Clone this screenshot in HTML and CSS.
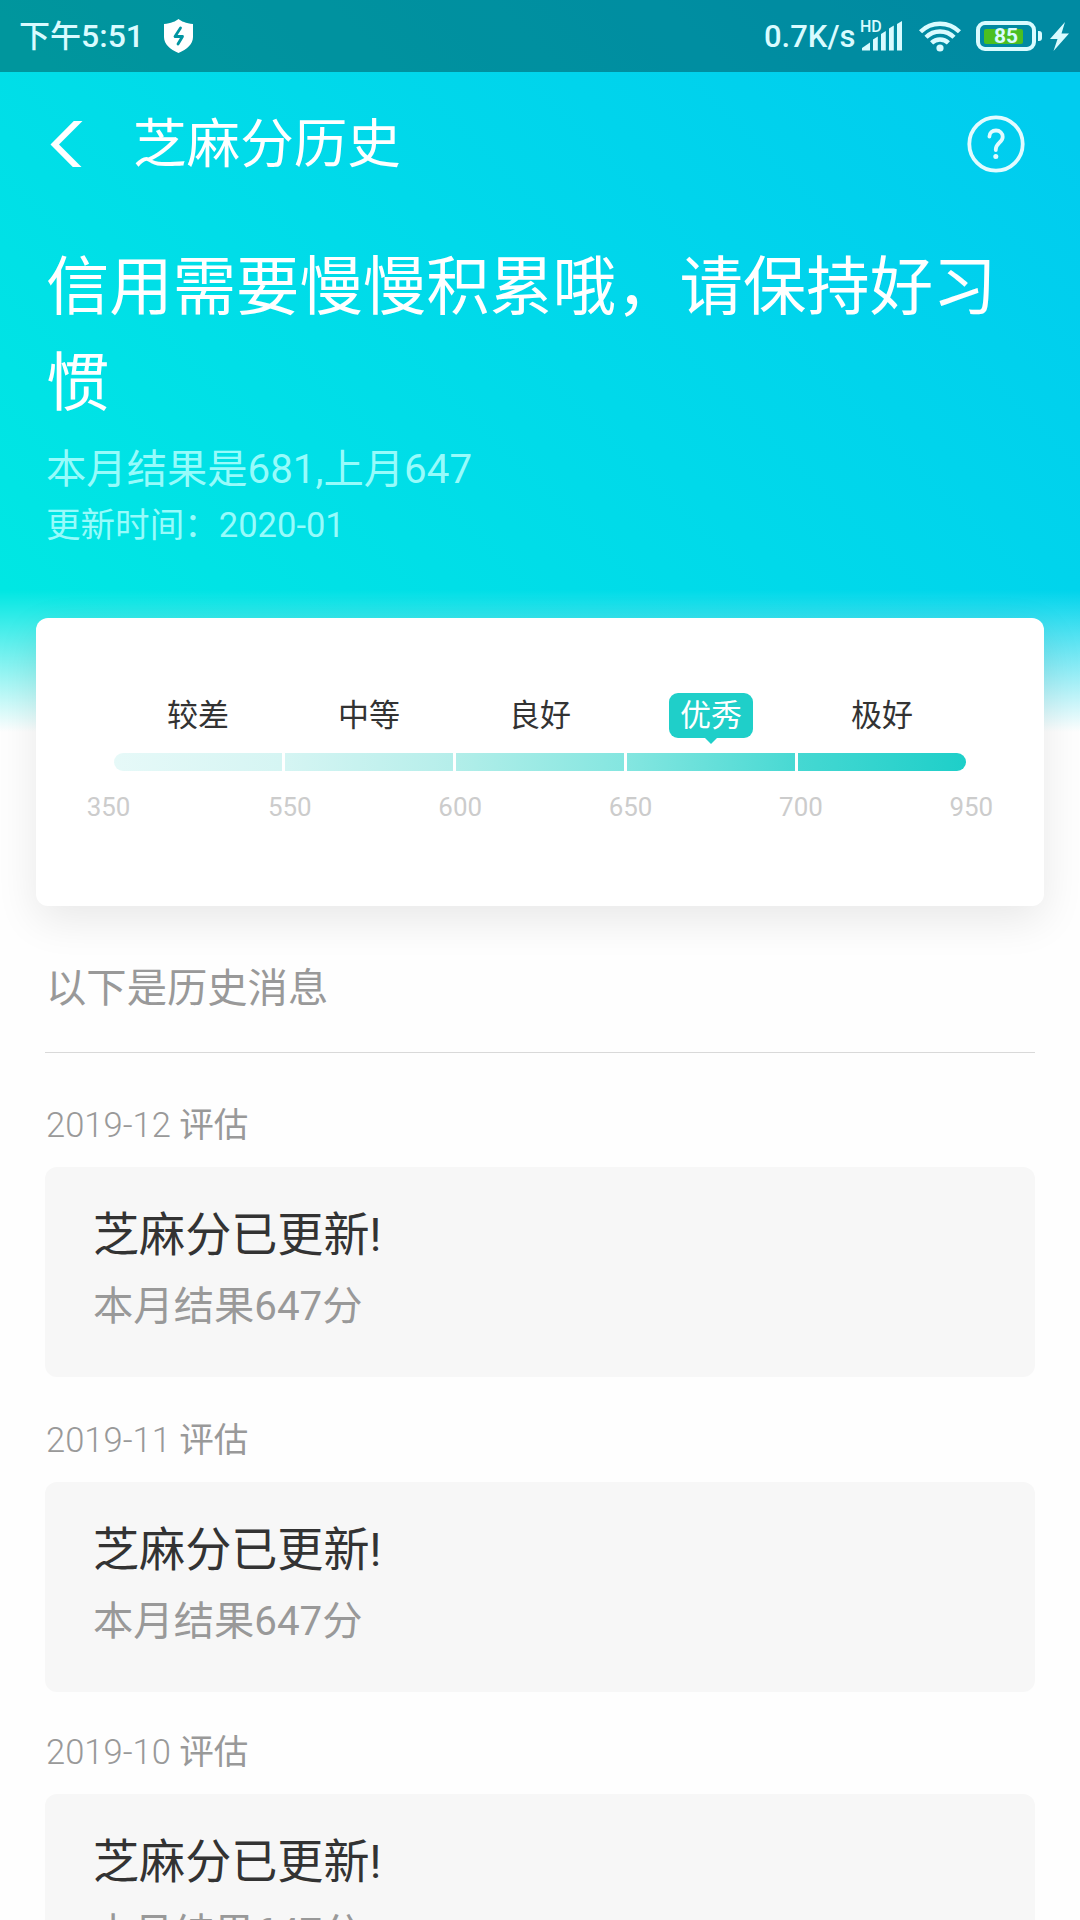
FILE: index.html
```html
<!DOCTYPE html>
<html lang="zh-CN">
<head>
  <meta charset="UTF-8" />
  <meta name="viewport" content="width=device-width, initial-scale=1.0"/>
  <title>芝麻分历史</title>
  <link rel="stylesheet" href="styles.css">
</head>
<body>
  <header class="hero">
    <!-- Status bar -->
    <div class="status-bar">
      <div class="status-left">
        <span class="clock">下午<span class="clock-time">5:51</span></span>
        <svg class="shield" width="29" height="34" viewBox="0 0 29 34">
          <path d="M14.5 0C17 2.2 22 4.4 29 5v13c0 7-6 12.500-14.500 16C6 30.500 0 25 0 18V5c7-.600 12-2.800 14.500-5z" fill="#fff"/>
          <path d="M16.500 9L11 17.500h7.500L14 25" fill="none" stroke="#0094a1" stroke-width="2.800" stroke-linejoin="round" stroke-linecap="round"/>
        </svg>
      </div>
      <div class="status-right">
        <span class="speed">0.7K/s</span>
        <div class="signal">
          <span class="hd">HD</span>
          <svg width="42" height="30" viewBox="0 0 42 30" fill="#d9fbff">
            <path d="M1 29.500v-2.500l8-5.500v8z"/>
            <path d="M12 29.500v-11l4.800-3v14z"/>
            <path d="M20 29.500v-16.500l4.800-3v19.500z"/>
            <path d="M28 29.500v-22l4.800-3v25z"/>
            <path d="M36 29.500v-26.500l5-3v29.500z"/>
          </svg>
        </div>
        <svg class="wifi" width="42" height="31" viewBox="0 0 42 31" fill="none" stroke="#d9fbff" stroke-width="4.400">
          <path d="M1.500 10.800a27.500 27.500 0 0 1 39 0"/>
          <path d="M7 16.300a19.800 19.800 0 0 1 28 0"/>
          <path d="M12.600 21.900a11.900 11.900 0 0 1 16.800 0"/>
          <circle cx="21" cy="27" r="3.600" fill="#d9fbff" stroke="none"/>
        </svg>
        <div class="battery"><div class="battery-level"></div><span>85</span></div>
        <svg class="bolt" width="19" height="29" viewBox="0 0 19 29">
          <path d="M15 0L0 17h7.500L3.500 29 19 11.500h-7.500z" fill="#d9fbff"/>
        </svg>
      </div>
    </div>
    <!-- Navigation -->
    <nav>
      <svg class="back" width="33" height="48" viewBox="0 0 33 48">
        <path d="M23.800 1h8.700L9 24.500 31.500 47h-8.700L.500 24.500z" fill="#fff"/>
      </svg>
      <h1>芝麻分历史</h1>
      <svg class="help" width="58" height="58" viewBox="0 0 58 58" fill="none" stroke="#e2fbff" stroke-linecap="round">
        <circle cx="29" cy="29" r="26.700" stroke-width="3.800"/>
        <path d="M22.400 21.500c0-3.600 2.800-6 6.600-6s6.700 2.600 6.700 6.400c0 5.200-6.900 6.400-6.900 12.300v.800" stroke-width="3.800"/>
        <circle cx="28.800" cy="41.500" r="2.500" fill="#e2fbff" stroke="none"/>
      </svg>
    </nav>
    <!-- Summary -->
    <div class="summary">
      <h2>信用需要慢慢积累哦，请保持好习惯</h2>
      <p class="result">本月结果是681,上月647</p>
      <p class="updated">更新时间：2020-01</p>
    </div>
  </header>

  <!-- Score scale -->
  <section class="score-card">
    <div class="levels">
      <span>较差</span>
      <span>中等</span>
      <span>良好</span>
      <span><b class="current">优秀</b></span>
      <span>极好</span>
    </div>
    <div class="bar"><i></i><i></i><i></i><i></i><i></i></div>
    <div class="ticks">
      <span class="first">350</span>
      <span>550</span>
      <span>600</span>
      <span>650</span>
      <span>700</span>
      <span>950</span>
    </div>
  </section>

  <!-- History -->
  <main class="history">
    <h3>以下是历史消息</h3>
    <section class="record">
      <p class="date"><time>2019-12 </time>评估</p>
      <div class="message">
        <h4>芝麻分已更新!</h4>
        <p>本月结果647分</p>
      </div>
    </section>
    <section class="record">
      <p class="date"><time>2019-11 </time>评估</p>
      <div class="message">
        <h4>芝麻分已更新!</h4>
        <p>本月结果647分</p>
      </div>
    </section>
    <section class="record">
      <p class="date"><time>2019-10 </time>评估</p>
      <div class="message">
        <h4>芝麻分已更新!</h4>
        <p>本月结果647分</p>
      </div>
    </section>
  </main>
</body>
</html>
```

FILE: styles.css
```css
/* Global Reset */
* { margin: 0; padding: 0; box-sizing: border-box; }
body {
  height: 1920px;
  overflow: hidden;
  background: #fefefe;
  font-family: Roboto, "Noto Sans CJK SC", sans-serif;
  color: #333;
}
h1, h2, h3, h4 { font-weight: 400; }
svg { display: block; flex: none; }
/* Header */
.hero {
  height: 732px;
  background:
    linear-gradient(to bottom, rgba(254,254,254,0) 590px, #fefefe 732px),
    linear-gradient(45deg, #00e7e3 8%, #00d9ea 52%, #00ccef 92%);
  color: #fff;
}
/* Status Bar */
.status-bar {
  display: flex;
  justify-content: space-between;
  height: 72px;
  padding: 0 11px 0 19px;
  background: rgba(0,0,0,0.32);
  color: #d9fbff;
}
.status-left, .status-right {
  display: flex;
  align-items: center;
}
.clock {
  width: 145px;
  padding-top: 1px;
  font-size: 31px;
  font-weight: 500;
  line-height: 72px;
  white-space: nowrap;
}
.clock-time { font-size: 32px; }
.speed {
  width: 97px;
  font-size: 31px;
  font-weight: 500;
}
.signal {
  position: relative;
  margin-right: 16px;
}
.hd {
  position: absolute;
  left: -1px;
  top: -3px;
  font-size: 16px;
  font-weight: 500;
  line-height: 18px;
}
.wifi { margin-right: 15px; }
.battery {
  position: relative;
  width: 60px;
  height: 30px;
  margin-right: 14px;
  padding: 4px;
  border: 4px solid #d9fbff;
  border-radius: 9px;
}
.battery::after {
  content: "";
  position: absolute;
  right: -10px;
  top: 6px;
  width: 4px;
  height: 10px;
  border-radius: 0 3px 3px 0;
  background: #d9fbff;
}
.battery-level {
  width: 39px;
  height: 15px;
  border-radius: 2px;
  background: #4bbf20;
}
.battery span {
  position: absolute;
  left: 14px;
  top: 0;
  font-size: 21px;
  font-weight: 700;
  line-height: 22px;
}
/* Navigation */
nav {
  display: flex;
  align-items: center;
  height: 144px;
  padding: 0 55px 0 50px;
}
.back { margin-right: 50px; }
nav h1 {
  flex: 1;
  padding-top: 2px;
  font-size: 53.6px;
  line-height: 72px;
}
/* Summary */
.summary { padding: 23px 45px 0 46px; }
.summary h2 {
  font-size: 63.36px;
  line-height: 96px;
}
.result {
  margin-top: 9px;
  font-size: 40.32px;
  line-height: 60px;
  color: #97fbfb;
}
.updated {
  margin-top: -1px;
  font-size: 34.56px;
  line-height: 52px;
  color: #97fbfb;
}
/* Score Card */
.score-card {
  position: relative;
  width: 1008px;
  height: 288px;
  margin: -114px auto 0;
  padding: 75px 78px 0;
  border-radius: 12px;
  background: #fff;
  box-shadow: 0 14px 43px rgba(0,0,0,0.09);
}
.levels, .bar {
  display: flex;
  gap: 3px;
}
.levels span {
  flex: 1;
  font-size: 31px;
  line-height: 45px;
  text-align: center;
}
.current {
  position: relative;
  display: block;
  width: 84px;
  margin: 0 auto;
  border-radius: 9px;
  background: #1fcfc9;
  color: #fff;
  font-weight: 400;
}
.current::after {
  content: "";
  position: absolute;
  left: 36px;
  top: 45px;
  border: 6px solid transparent;
  border-top-color: #1fcfc9;
  border-bottom: 0;
}
.bar { margin-top: 15px; }
.bar i {
  flex: 1;
  height: 18px;
}
.bar i:nth-child(1) { background: linear-gradient(to right, #e6f9f8, #d5f5f3); border-radius: 9px 0 0 9px; }
.bar i:nth-child(2) { background: linear-gradient(to right, #d5f5f3, #b5eeea); }
.bar i:nth-child(3) { background: linear-gradient(to right, #b2eee9, #84e6e0); }
.bar i:nth-child(4) { background: linear-gradient(to right, #84e6e0, #48d9d3); }
.bar i:nth-child(5) { background: linear-gradient(to right, #45d8d2, #1ecfc9); border-radius: 0 9px 9px 0; }
.ticks {
  display: flex;
  margin: 20px -40px 0 -40px;
  font-size: 25.92px;
  line-height: 32px;
  color: #ccc;
  text-align: center;
}
.ticks span {
  width: 170.4px;
  flex: none;
}
.ticks .first {
  width: 130.6px;
  padding-right: 61.6px;
}
/* History */
.history { padding: 48px 45px 0; }
.history h3 {
  height: 99px;
  margin-bottom: 43px;
  padding: 2px 1px 0;
  border-bottom: 1px solid #d9d9d9;
  font-size: 40.32px;
  line-height: 66px;
  color: #999;
}
.record { margin-bottom: 34px; }
.record:nth-of-type(2) { margin-bottom: 31px; }
.date {
  padding: 0 1px 13px;
  font-size: 34.56px;
  line-height: 58px;
  color: #999;
}
.date time { font-weight: 300; }
.message {
  height: 210px;
  padding: 34px 48px 0;
  border-radius: 12px;
  background: #f7f7f7;
}
.message h4 {
  font-size: 46.08px;
  line-height: 68px;
}
.message p {
  margin-top: 8px;
  font-size: 40.32px;
  line-height: 60px;
  color: #999;
}
```
